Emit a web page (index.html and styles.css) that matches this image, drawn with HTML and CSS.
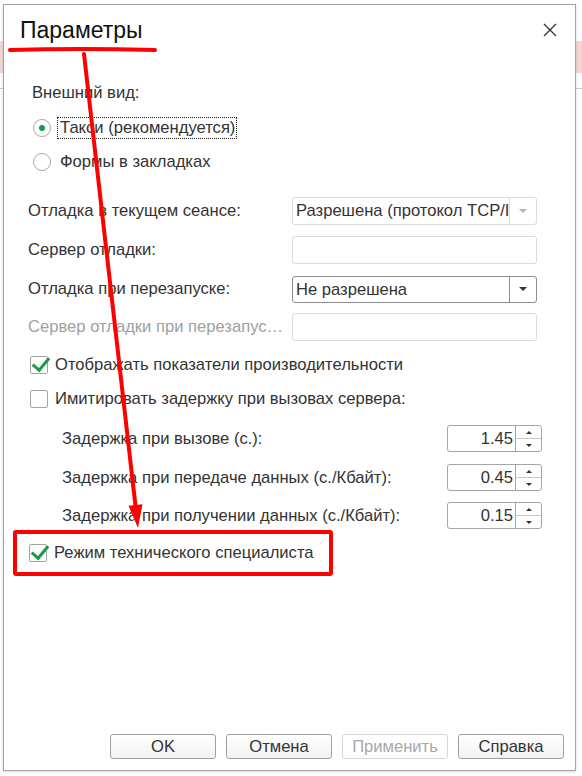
FILE: index.html
```html
<!DOCTYPE html>
<html lang="ru">

<head>
  <meta charset="UTF-8">
  <meta name="viewport" content="width=device-width, initial-scale=1.0">
  <title>Параметры</title>

  <link rel="stylesheet" href="styles.css">
</head>

<body>
  <div class="dialog">
    <div class="dlg-head">
      <h1 class="dlg-title">Параметры</h1>
      <span class="dlg-close">
        <svg width="14" height="14" viewBox="0 0 14 14"><path d="M1 1L13 13M13 1L1 13" stroke="#333" stroke-width="1.3" fill="none"/></svg>
      </span>
    </div>

    <div class="dlg-body">
      <div class="group-title">Внешний вид:</div>
      <div class="radio-row"><span class="radio on"></span><span class="focus">Такси (рекомендуется)</span></div>
      <div class="radio-row"><span class="radio"></span><span class="radio-text">Формы в закладках</span></div>

      <!-- отладка -->
      <div class="field-row r1">
        <span class="field-label">Отладка в текущем сеансе:</span>
        <div class="combo off"><span class="combo-text">Разрешена (протокол TCP/IP)</span><span class="combo-btn"><i class="tri"></i></span></div>
      </div>
      <div class="field-row r2">
        <span class="field-label">Сервер отладки:</span>
        <div class="input off"></div>
      </div>
      <div class="field-row r3">
        <span class="field-label">Отладка при перезапуске:</span>
        <div class="combo"><span class="combo-text">Не разрешена</span><span class="combo-btn"><i class="tri"></i></span></div>
      </div>
      <div class="field-row r4">
        <span class="field-label grey">Сервер отладки при перезапуске:</span>
        <div class="input off"></div>
      </div>

      <div class="check-row c1"><span class="check on"></span><span>Отображать показатели производительности</span></div>
      <div class="check-row"><span class="check"></span><span>Имитировать задержку при вызовах сервера:</span></div>

      <div class="spin-row s1">
        <span class="spin-label">Задержка при вызове (с.):</span>
        <div class="spin"><span class="spin-val">1.45</span><span class="spin-btns"><i class="up"></i><i class="down"></i></span></div>
      </div>
      <div class="spin-row s2">
        <span class="spin-label">Задержка при передаче данных (с./Кбайт):</span>
        <div class="spin"><span class="spin-val">0.45</span><span class="spin-btns"><i class="up"></i><i class="down"></i></span></div>
      </div>
      <div class="spin-row s3">
        <span class="spin-label">Задержка при получении данных (с./Кбайт):</span>
        <div class="spin"><span class="spin-val">0.15</span><span class="spin-btns"><i class="up"></i><i class="down"></i></span></div>
      </div>

      <!-- выделено красной рамкой -->
      <div class="check-row marked"><span class="check on"></span><span>Режим технического специалиста</span></div>
    </div>

    <div class="dlg-buttons">
      <span class="btn">OK</span>
      <span class="btn">Отмена</span>
      <span class="btn off">Применить</span>
      <span class="btn">Справка</span>
    </div>
  </div>

  <!-- пометки поверх скриншота -->
  <svg class="marks" width="582" height="776" viewBox="0 0 582 776">
    <path d="M10 50 Q80 48 155 50" stroke="#f00" stroke-width="4" stroke-linecap="round" fill="none"/>
    <path d="M84 54 L135.5 506" stroke="#f00" stroke-width="4" stroke-linecap="round" fill="none"/>
    <polygon points="128.5,505.8 142.5,504.2 138,528" fill="#f00"/>
  </svg>
</body>

</html>
```

FILE: styles.css
```css
* {
  margin: 0;
  padding: 0;
  box-sizing: border-box;
}

body {
  width: 582px;
  height: 776px;
  overflow: hidden;
  position: relative;
  font-family: "Liberation Sans", Arial, sans-serif;
  font-size: 16.6px;
  color: #333;
  background: linear-gradient(to bottom, #fff 41px, #f3d6d6 41px, #f3d6d6 73px, #fff 73px, #fff 88px, #ccc 88px, #ccc 89px, #fff 89px);
  padding: 4px 0 0 3px;
}

.dialog {
  width: 573px;
  height: 767px;
  background: #fff;
  border: 1px solid #a3a3a3;
  box-shadow: 0 1px 3px rgba(0, 0, 0, 0.15);
  display: flex;
  flex-direction: column;
}

/* шапка */
.dlg-head {
  height: 50px;
  display: flex;
  align-items: center;
  padding-left: 16px;
}

.dlg-title {
  flex: 1;
  font-size: 23px;
  font-weight: normal;
  color: #111;
  line-height: 50px;
}

.dlg-close {
  width: 30px;
  height: 30px;
  margin-right: 10px;
  display: flex;
  align-items: center;
  justify-content: center;
}

.dlg-body {
  flex: 1;
}

.group-title {
  height: 24px;
  line-height: 24px;
  margin: 26px 0 0 28px;
}

/* радио */
.radio-row {
  height: 34px;
  display: flex;
  align-items: center;
  margin-left: 29px;
}

.radio-row:nth-of-type(2) {
  margin-top: 6px;
}

.radio {
  width: 18px;
  height: 18px;
  border: 1px solid #a8a8a8;
  border-radius: 50%;
  margin-right: 9px;
  display: flex;
  align-items: center;
  justify-content: center;
}

.radio.on::after {
  content: "";
  width: 6px;
  height: 6px;
  border-radius: 50%;
  background: #1a9a4a;
}

.focus {
  outline: 1px dotted #222;
  padding: 0 1px 0 2px;
  line-height: 20px;
  margin-left: -2px;
}

/* поля */
.field-row {
  height: 28px;
  display: flex;
  align-items: center;
  margin-left: 24px;
}

.field-row.r1 {
  margin-top: 18px;
}

.field-row.r2,
.field-row.r3 {
  margin-top: 11px;
}

.field-row.r4 {
  margin-top: 10px;
}

.field-label {
  width: 264px;
  white-space: nowrap;
  overflow: hidden;
  text-overflow: ellipsis;
  padding-right: 6px;
}

.field-label.grey {
  color: #a0a0a0;
}

.input,
.combo {
  width: 245px;
  height: 28px;
  border: 1px solid #8f8f8f;
  border-radius: 3px;
  display: flex;
}

.input.off,
.combo.off {
  border-color: #dcdcdc;
}

.combo.off .combo-btn {
  border-left-color: #dcdcdc;
}

.combo.off .tri {
  border-top-color: #b5b5b5;
}

.combo-text {
  flex: 1;
  padding-left: 3px;
  line-height: 26px;
  white-space: nowrap;
  overflow: hidden;
}

.combo-btn {
  width: 27px;
  border-left: 1px solid #8f8f8f;
  display: flex;
  align-items: center;
  justify-content: center;
}

.tri {
  width: 0;
  height: 0;
  border-left: 4px solid transparent;
  border-right: 4px solid transparent;
  border-top: 4px solid #333;
}

.field-row.r3 .combo {
  height: 27px;
}

/* флажки */
.check-row {
  height: 34px;
  display: flex;
  align-items: center;
  margin-left: 26px;
}

.check-row.c1 {
  margin-top: 7px;
}

.check {
  width: 18px;
  height: 18px;
  border: 1px solid #a3a3a3;
  border-radius: 2px;
  margin-right: 7px;
  position: relative;
}

.check.on::after {
  content: "";
  position: absolute;
  left: 5px;
  top: -3px;
  width: 7px;
  height: 14px;
  border-right: 3px solid #1a9a4a;
  border-bottom: 3px solid #1a9a4a;
  transform: rotate(40deg);
}

/* задержки */
.spin-row {
  height: 27px;
  display: flex;
  align-items: center;
  margin: 0 33px 0 58px;
}

.spin-row.s1 {
  margin-top: 9px;
}

.spin-row.s2 {
  margin-top: 12px;
}

.spin-row.s3 {
  margin-top: 11px;
}

.spin-label {
  flex: 1;
}

.spin {
  width: 95px;
  height: 27px;
  border: 1px solid #a5a5a5;
  border-radius: 3px;
  display: flex;
}

.spin-val {
  flex: 1;
  text-align: right;
  padding-right: 2px;
  line-height: 25px;
}

.spin-btns {
  width: 26px;
  border-left: 1px solid #a5a5a5;
  display: flex;
  flex-direction: column;
}

.spin-btns i {
  flex: 1;
  display: flex;
  align-items: center;
  justify-content: center;
}

.spin-btns .up {
  border-bottom: 1px solid #c8c8c8;
}

.spin-btns .up::after {
  content: "";
  border-left: 3px solid transparent;
  border-right: 3px solid transparent;
  border-bottom: 3px solid #333;
}

.spin-btns .down::after {
  content: "";
  border-left: 3px solid transparent;
  border-right: 3px solid transparent;
  border-top: 3px solid #333;
}

.check-row.marked {
  width: 320px;
  height: 46px;
  margin: 1px 0 0 9px;
  padding-left: 12px;
  border: 4px solid #f00;
  border-radius: 3px;
}

/* кнопки */
.dlg-buttons {
  display: flex;
  justify-content: flex-end;
  gap: 10px;
  padding: 0 11px 11px 0;
}

.btn {
  width: 106px;
  height: 25px;
  line-height: 23px;
  text-align: center;
  border: 1px solid #a0a0a0;
  border-radius: 3px;
  background: linear-gradient(#fff, #f2f2f2);
  color: #333;
}

.btn.off {
  border-color: #d6d6d6;
  color: #a8a8a8;
  background: #fff;
}

.marks {
  position: absolute;
  left: 0;
  top: 0;
  pointer-events: none;
}
```
